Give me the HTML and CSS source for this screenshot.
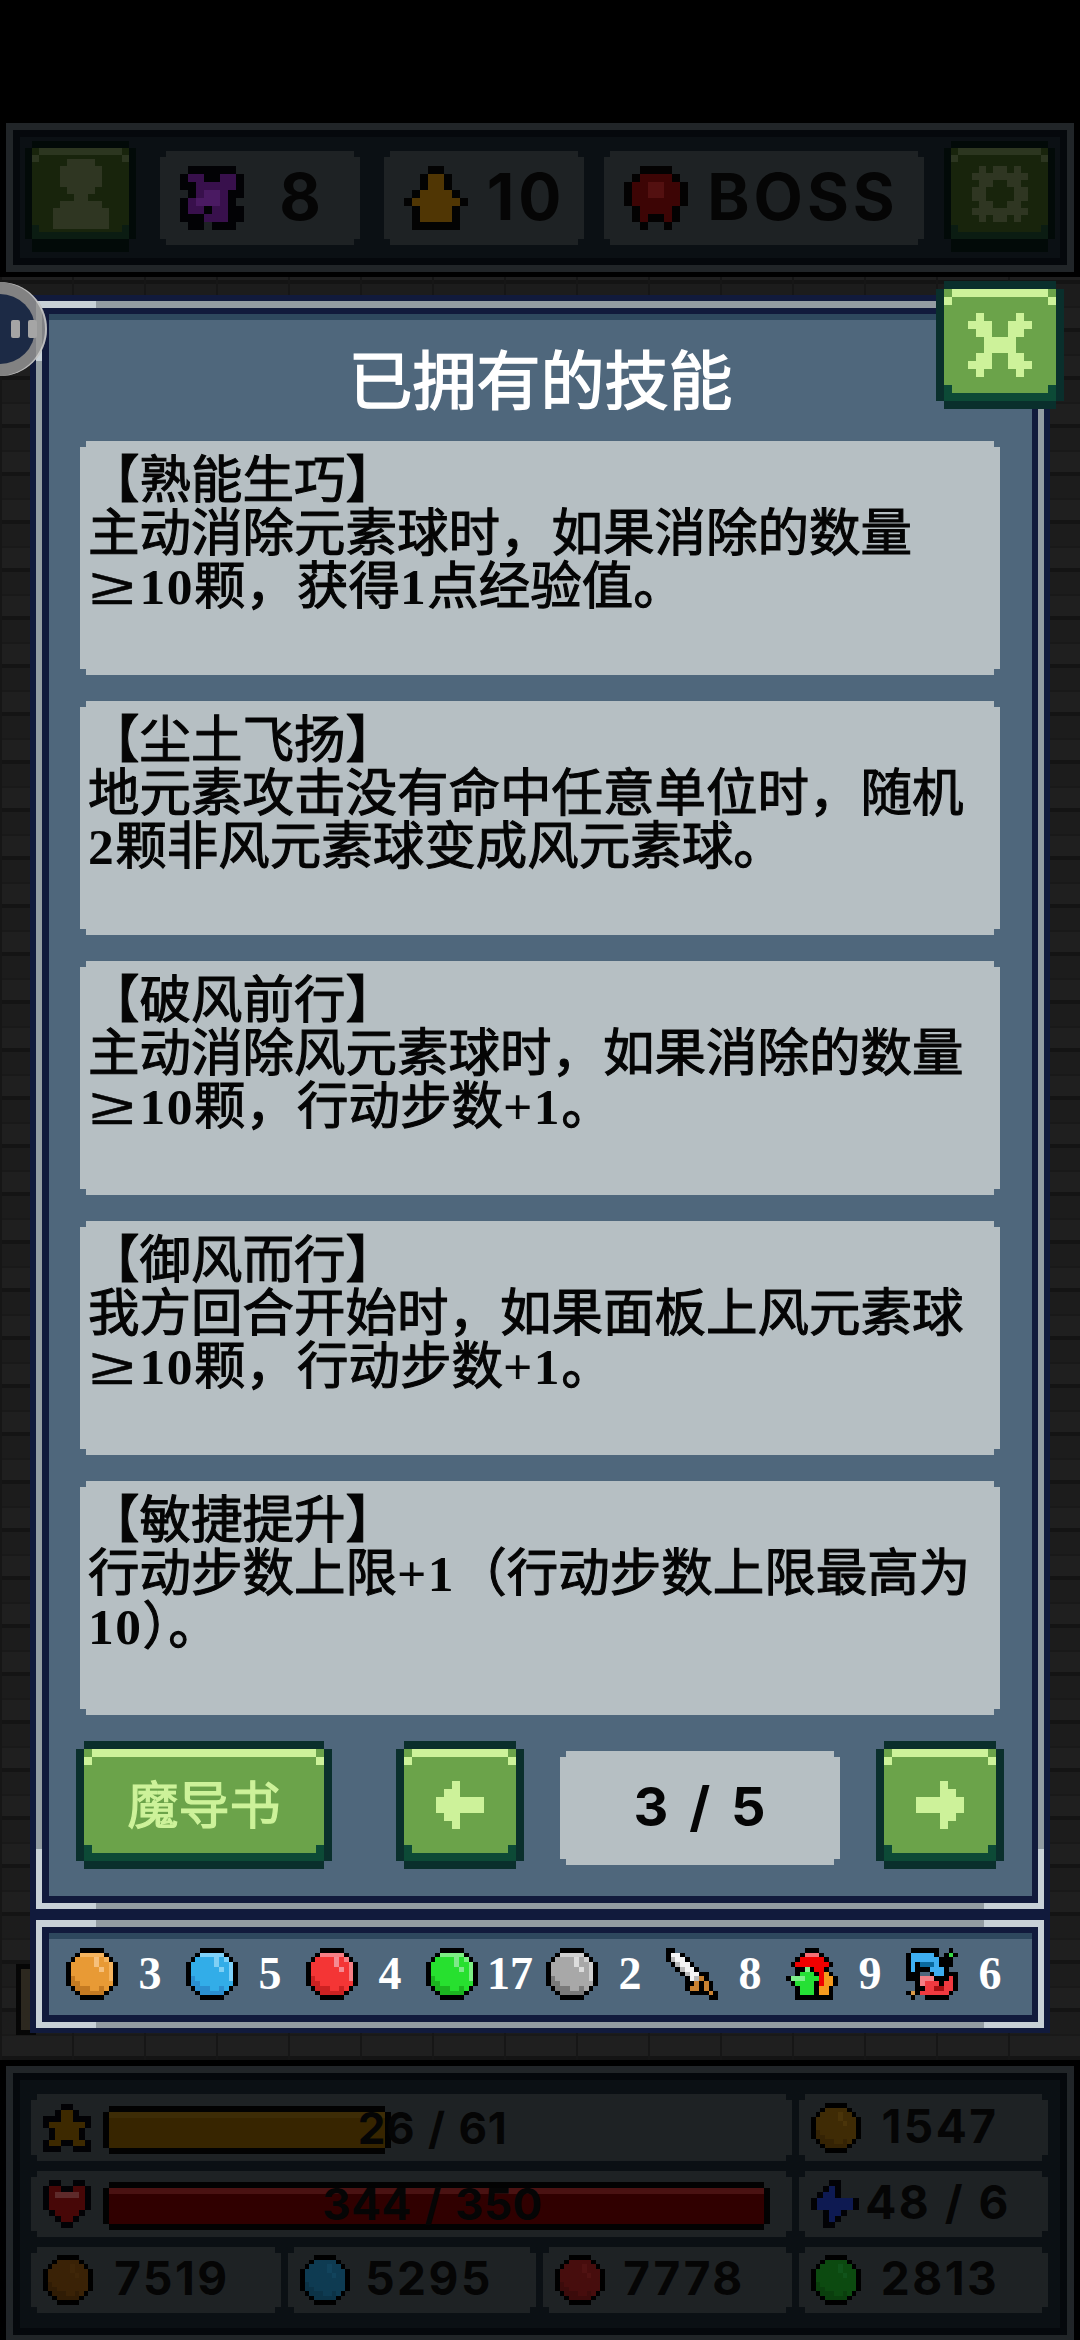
FILE: index.html
```html
<!DOCTYPE html>
<html lang="zh">
<head>
    <meta charset="UTF-8">
    <meta name="viewport" content="width=device-width, initial-scale=1.0">
    <title>已拥有的技能</title>
    <link rel="stylesheet" href="styles.css">
</head>
<body>
    <!-- shared pixel orb, coloured through --b --l --s --h -->
    <svg class="defs" width="0" height="0">
        <symbol id="orb" viewBox="0 0 11 11">
            <path class="o-base" d="M3 1.5h5M2 2.5h7M1 3.5h9M1 4.5h9M1 5.5h9M1 6.5h9M1 7.5h9M2 8.5h7M3 9.5h5"/>
            <path class="o-light" d="M3 1.5h5M8 2.5h1M9.5 3v4"/>
            <path class="o-shade" d="M1 6.5h1M1 7.5h2M2 8.5h3M3 9.5h5M7 8.5h1"/>
            <path class="o-spec" d="M6 3.5h1M7 4.5h1M6 2.5h1"/>
            <path class="o-line" d="M3 .5h5M2 1.5h1M8 1.5h1M1 2.5h1M9 2.5h1M.5 3v5M10.5 3v5M1 8.5h1M9 8.5h1M2 9.5h1M8 9.5h1M3 10.5h5"/>
        </symbol>
    </svg>

    <div class="screen">
        <div class="notch-area"></div>

        <header class="hud hud-top">
            <div class="hud-strip">
                <div class="hud-inner top-row">
                    <button class="btn btn-dim btn-avatar">
                        <svg class="px" width="56" height="70" viewBox="0 0 8 10"><path stroke="#2f3622" d="M2 .5h4M1 1.5h6M1 2.5h6M1 3.5h6M2 4.5h4M3 5.5h2M1 6.5h6M0 7.5h8M0 8.5h8M0 9.5h8"/></svg>
                    </button>
                    <div class="top-card notch card-floor">
                        <svg class="px" width="64" height="64" viewBox="0 0 8 8"><path stroke="#020205" d="M1 .5h6M0 1.5h8M0 2.5h8M1 3.5h7M0 4.5h7M0 5.5h8M0 6.5h8M1 7.5h2M4 7.5h3"/><path stroke="#38104c" d="M1 1.5h2M5 1.5h2M2 2.5h2M4 2.5h3M2 3.5h4M1 4.5h5M1 5.5h2M4 5.5h2M3 6.5h3"/><path stroke="#4a1a62" d="M3 3.5h2M2 4.5h3"/></svg>
                        <span class="top-value">8</span>
                    </div>
                    <div class="top-card notch card-step">
                        <svg class="px" width="64" height="64" viewBox="0 0 8 8"><path stroke="#030303" d="M3 .5h2M2 1.5h4M2 2.5h4M1 3.5h6M0 4.5h8M1 5.5h6M1 6.5h6M1 7.5h6"/><path stroke="#503604" d="M3 1.5h2M3 2.5h2M2 3.5h4M1 4.5h6M2 5.5h4M2 6.5h4"/></svg>
                        <span class="top-value">10</span>
                    </div>
                    <div class="top-card notch card-boss">
                        <svg class="px" width="64" height="64" viewBox="0 0 8 8"><path stroke="#030202" d="M2 .5h4M1 1.5h6M0 2.5h8M0 3.5h8M0 4.5h8M1 5.5h6M1 6.5h6M2 7.5h1M5 7.5h1"/><path stroke="#3d0505" d="M2 1.5h4M1 2.5h6M1 3.5h6M1 4.5h6M2 5.5h4M2 6.5h1M5 6.5h1"/><path stroke="#531010" d="M3 2.5h2M3 3.5h2"/></svg>
                        <span class="top-value">BOSS</span>
                    </div>
                    <button class="btn btn-dim btn-gear">
                        <svg class="px" width="56" height="56" viewBox="0 0 8 8"><path stroke="#2f3622" d="M1 .5h1M3 .5h2M6 .5h1M0 1.5h8M1 2.5h2M5 2.5h2M0 3.5h2M6 3.5h2M0 4.5h2M6 4.5h2M1 5.5h2M5 5.5h2M0 6.5h8M1 7.5h1M3 7.5h2M6 7.5h1"/></svg>
                    </button>
                </div>
            </div>
        </header>

        <main class="wall">
            <div class="stray-item"></div>

            <div class="dialog">
                <section class="frame">
                    <div class="frame-body">
                        <div class="panel panel-skills">
                            <h1 class="dialog-title">已拥有的技能</h1>

                            <div class="skill-list">
                                <article class="skill notch">【熟能生巧】<br>主动消除元素球时，如果消除的数量<br><span class="ge">≥</span><span class="num">10</span>颗，获得<span class="num">1</span>点经验值。</article>
                                <article class="skill notch">【尘土飞扬】<br>地元素攻击没有命中任意单位时，随机<br><span class="num">2</span>颗非风元素球变成风元素球。</article>
                                <article class="skill notch">【破风前行】<br>主动消除风元素球时，如果消除的数量<br><span class="ge">≥</span><span class="num">10</span>颗，行动步数<span class="num">+1</span>。</article>
                                <article class="skill notch">【御风而行】<br>我方回合开始时，如果面板上风元素球<br><span class="ge">≥</span><span class="num">10</span>颗，行动步数<span class="num">+1</span>。</article>
                                <article class="skill notch">【敏捷提升】<br>行动步数上限<span class="num">+1</span>（行动步数上限最高为<br><span class="num">10</span>）。</article>
                            </div>

                            <div class="pager">
                                <button class="btn btn-book">魔导书</button>
                                <button class="btn btn-arrow">
                                    <svg class="px" width="48" height="48" viewBox="0 0 6 6"><path stroke="#cdf29a" d="M2 .5h1M1 1.5h2M0 2.5h6M0 3.5h6M1 4.5h2M2 5.5h1"/></svg>
                                </button>
                                <div class="page-count notch">3 / 5</div>
                                <button class="btn btn-arrow">
                                    <svg class="px" width="48" height="48" viewBox="0 0 6 6"><path stroke="#cdf29a" d="M3 .5h1M3 1.5h2M0 2.5h6M0 3.5h6M3 4.5h2M3 5.5h1"/></svg>
                                </button>
                            </div>
                        </div>
                    </div>
                </section>

                <section class="frame">
                    <div class="frame-body">
                        <div class="panel panel-items">
                            <div class="item"><svg class="orb orb-orange" width="52" height="52"><use href="#orb"/></svg><span class="item-count">3</span></div>
                            <div class="item"><svg class="orb orb-blue" width="52" height="52"><use href="#orb"/></svg><span class="item-count">5</span></div>
                            <div class="item"><svg class="orb orb-red" width="52" height="52"><use href="#orb"/></svg><span class="item-count">4</span></div>
                            <div class="item"><svg class="orb orb-green" width="52" height="52"><use href="#orb"/></svg><span class="item-count">17</span></div>
                            <div class="item"><svg class="orb orb-gray" width="52" height="52"><use href="#orb"/></svg><span class="item-count">2</span></div>
                            <div class="item">
                                <svg class="px" width="52" height="52" viewBox="0 0 11 11">
                                    <path stroke="#f4f4f4" d="M1 1.5h2M2 2.5h2M3 3.5h2M4 4.5h2M5 5.5h2M5 6.5h1"/>
                                    <path stroke="#b9b9b9" d="M1 2.5h1M2 3.5h1M3 4.5h1M4 5.5h1M6 6.5h1"/>
                                    <path stroke="#c98232" d="M7 6.5h1M6 7.5h1M5 8.5h2M8 7.5h1M8 8.5h1M9 9.5h1"/>
                                    <path stroke="#000" d="M0 .5h2M0 1.5h1M3 1.5h1M0 2.5h1M4 2.5h1M1 3.5h1M5 3.5h1M2 4.5h1M6 4.5h1M3 5.5h1M7 5.5h2M4 6.5h1M8 6.5h1M4 7.5h2M7 7.5h1M9 7.5h1M4 8.5h1M7 8.5h1M9 8.5h1M5 9.5h4M10 9.5h1M9 10.5h2"/>
                                </svg>
                                <span class="item-count">8</span>
                            </div>
                            <div class="item">
                                <svg class="px" width="52" height="52" viewBox="0 0 11 11">
                                    <path stroke="#f56f74" d="M4 1.5h3"/>
                                    <path stroke="#f00000" d="M3 2.5h5M2 3.5h7M6 4.5h2M7 5.5h1M7 6.5h1M7 7.5h1"/>
                                    <path stroke="#f59a1e" d="M8 5.5h1M8 6.5h2M8 7.5h2M7 8.5h2M7 9.5h2"/>
                                    <path stroke="#7df08a" d="M4 4.5h1M1 6.5h3"/>
                                    <path stroke="#25e035" d="M3 5.5h3M4 6.5h3M2 7.5h4M3 8.5h3M3 9.5h3"/>
                                    <path stroke="#000" d="M4 .5h3M3 1.5h1M7 1.5h1M2 2.5h1M8 2.5h1M1 3.5h1M9 3.5h1M2 4.5h2M5 4.5h1M8 4.5h1M2 5.5h1M6 5.5h1M9 5.5h1M0 6.5h1M10 6.5h1M1 7.5h1M6 7.5h1M10 7.5h1M2 8.5h1M6 8.5h1M9 8.5h1M2 9.5h1M6 9.5h1M9 9.5h1M2 10.5h8"/>
                                </svg>
                                <span class="item-count">9</span>
                            </div>
                            <div class="item">
                                <svg class="px" width="52" height="52" viewBox="0 0 11 11">
                                    <path stroke="#000" d="M1 .5h6M9 .5h1M0 1.5h1M6 1.5h1M8 1.5h1M10 1.5h1M0 2.5h1M7 2.5h3M0 3.5h1M2 3.5h1M7 3.5h3M0 4.5h1M2 4.5h3M8 4.5h1M0 5.5h3M5 5.5h1M8 5.5h3M0 6.5h3M6 6.5h3M10 6.5h1M2 7.5h1M7 7.5h1M10 7.5h1M2 8.5h2M10 8.5h1M0 9.5h1M2 9.5h1M9 9.5h1M1 10.5h1M4 10.5h5"/>
                                    <path stroke="#3eaef0" d="M1 1.5h5M1 2.5h6M1 3.5h1M6 3.5h1M1 4.5h1M5 4.5h3M6 5.5h2"/>
                                    <path stroke="#0a6a9f" d="M3 3.5h3"/>
                                    <path stroke="#38d848" d="M9 1.5h1"/>
                                    <path stroke="#f57f85" d="M3 6.5h3M3 7.5h1"/>
                                    <path stroke="#f03a40" d="M9 6.5h1M4 7.5h3M8 7.5h2M4 8.5h2M8 8.5h2M3 9.5h6"/>
                                    <path stroke="#a80f12" d="M6 8.5h2"/>
                                    <path stroke="#d89a4a" d="M1 9.5h1"/>
                                </svg>
                                <span class="item-count">6</span>
                            </div>
                        </div>
                    </div>
                </section>

                <button class="btn btn-close">
                    <svg class="px" width="64" height="64" viewBox="0 0 8 8"><path stroke="#cdf29a" d="M1 .5h1M6 .5h1M0 1.5h3M5 1.5h3M1 2.5h2M5 2.5h2M2 3.5h4M2 4.5h4M1 5.5h2M5 5.5h2M0 6.5h3M5 6.5h3M1 7.5h1M6 7.5h1"/></svg>
                </button>
            </div>
        </main>

        <footer class="hud hud-bottom">
            <div class="hud-strip">
                <div class="hud-inner stats">
                    <div class="stat stat-wide notch">
                        <svg class="px" width="48" height="48" viewBox="0 0 8 8"><path stroke="#020205" d="M3 .5h2M2 1.5h4M0 2.5h8M0 3.5h8M1 4.5h6M1 5.5h6M0 6.5h8M0 7.5h3M5 7.5h3"/><path stroke="#3d2900" d="M3 1.5h2M3 2.5h2M1 3.5h6M2 4.5h4M2 5.5h4M1 6.5h2M5 6.5h2"/></svg>
                        <div class="meter">
                            <div class="meter-fill fill-xp" style="width: 42.2%"></div>
                            <span class="meter-text">26 / 61</span>
                        </div>
                    </div>
                    <div class="stat notch">
                        <svg class="orb orb-gold" width="50" height="50"><use href="#orb"/></svg>
                        <span class="stat-value">1547</span>
                    </div>
                    <div class="stat stat-wide notch">
                        <svg class="px" width="48" height="48" viewBox="0 0 8 8"><path stroke="#020205" d="M1 .5h2M5 .5h2M0 1.5h8M0 2.5h8M0 3.5h8M0 4.5h8M1 5.5h6M2 6.5h4M3 7.5h2"/><path stroke="#470707" d="M1 1.5h2M5 1.5h2M1 2.5h6M1 3.5h6M1 4.5h6M2 5.5h4M3 6.5h2"/><path stroke="#5e2a2a" d="M2 2.5h4"/></svg>
                        <div class="meter">
                            <div class="meter-fill fill-hp" style="width: 100%"></div>
                            <span class="meter-text">344 / 350</span>
                        </div>
                    </div>
                    <div class="stat notch">
                        <svg class="px" width="48" height="48" viewBox="0 0 8 8"><path stroke="#020205" d="M3 .5h2M2 1.5h3M1 2.5h4M0 3.5h8M0 4.5h8M2 5.5h4M2 6.5h3M2 7.5h2"/><path stroke="#0e1a52" d="M3 1.5h1M2 2.5h2M1 3.5h6M1 4.5h6M3 5.5h2M3 6.5h1"/></svg>
                        <span class="stat-value">48 / 6</span>
                    </div>
                    <div class="stat notch">
                        <svg class="orb orb-brown" width="50" height="50"><use href="#orb"/></svg>
                        <span class="stat-value">7519</span>
                    </div>
                    <div class="stat notch">
                        <svg class="orb orb-teal" width="50" height="50"><use href="#orb"/></svg>
                        <span class="stat-value">5295</span>
                    </div>
                    <div class="stat notch">
                        <svg class="orb orb-wine" width="50" height="50"><use href="#orb"/></svg>
                        <span class="stat-value">7778</span>
                    </div>
                    <div class="stat notch">
                        <svg class="orb orb-moss" width="50" height="50"><use href="#orb"/></svg>
                        <span class="stat-value">2813</span>
                    </div>
                </div>
            </div>
        </footer>

        <div class="float-ball">
            <div class="float-ball-core">
                <span class="float-ball-tick"></span>
                <span class="float-ball-tick"></span>
            </div>
        </div>
    </div>
</body>
</html>
```

FILE: styles.css
```css
* {
    box-sizing: border-box;
}

body {
    margin: 0;
    background-color: #000000;
    font-family: "Noto Sans CJK SC", sans-serif;
}

.defs {
    position: absolute;
}

.screen {
    position: relative;
    width: 1080px;
    height: 2340px;
    display: flex;
    flex-direction: column;
    overflow: hidden;
}

.notch-area {
    height: 123px;
    background-color: #000000;
}

/* pixel art */
.px,
.orb {
    flex: none;
    display: block;
    shape-rendering: crispEdges;
}

.px path,
.orb path {
    fill: none;
    stroke-width: 1;
}

.o-base { stroke: var(--b); }
.o-light { stroke: var(--l); }
.o-shade { stroke: var(--s); }
.o-spec { stroke: var(--h); }
.o-line { stroke: #000000; }

.orb-orange { --b: #e89a35; --l: #f5b45f; --s: #c47a22; --h: #f6c07c; }
.orb-blue { --b: #32ade8; --l: #7fd2fa; --s: #2b8fd0; --h: #7fd0f5; }
.orb-red { --b: #f43535; --l: #f77f85; --s: #cc2222; --h: #f58a92; }
.orb-green { --b: #27e02f; --l: #7dee84; --s: #1cb520; --h: #7fe88a; }
.orb-gray { --b: #a8a8a8; --l: #d0d0d0; --s: #7a7a7a; --h: #dcdcdc; }
.orb-gold { --b: #3f2b05; --l: #3f2b05; --s: #352304; --h: #4a3409; }
.orb-brown { --b: #3a2206; --l: #3a2206; --s: #301c05; --h: #3f2608; }
.orb-teal { --b: #0e3b52; --l: #0e3b52; --s: #0c3347; --h: #11435c; }
.orb-wine { --b: #470d0d; --l: #470d0d; --s: #3c0b0b; --h: #501212; }
.orb-moss { --b: #0c4a10; --l: #0c4a10; --s: #0a3f0d; --h: #10531a; }

/* stepped corners */
.notch {
    clip-path: polygon(
        6px 0, calc(100% - 6px) 0, calc(100% - 6px) 6px, 100% 6px,
        100% calc(100% - 6px), calc(100% - 6px) calc(100% - 6px), calc(100% - 6px) 100%, 6px 100%,
        6px calc(100% - 6px), 0 calc(100% - 6px), 0 6px, 6px 6px
    );
}

/* buttons */
.btn {
    --u: 8px;
    --hi: #cdf29a;
    --lo: #0c4a36;
    --face: #6ba34a;
    --edge: #0a2f2c;
    margin: var(--u);
    padding: 0;
    border: none;
    height: 112px;
    display: flex;
    flex: none;
    align-items: center;
    justify-content: center;
    box-shadow: calc(var(--u) * -1) 0 0 var(--edge), var(--u) 0 0 var(--edge), 0 calc(var(--u) * -1) 0 var(--edge), 0 var(--u) 0 var(--edge);
    background:
        linear-gradient(var(--hi), var(--hi)) var(--u) 0 / calc(100% - var(--u) * 2) var(--u) no-repeat,
        linear-gradient(var(--hi), var(--hi)) 0 var(--u) / var(--u) var(--u) no-repeat,
        linear-gradient(var(--hi), var(--hi)) 100% var(--u) / var(--u) var(--u) no-repeat,
        linear-gradient(var(--lo), var(--lo)) 0 100% / 100% var(--u) no-repeat,
        linear-gradient(var(--lo), var(--lo)) 0 calc(100% - var(--u)) / var(--u) var(--u) no-repeat,
        linear-gradient(var(--lo), var(--lo)) 100% calc(100% - var(--u)) / var(--u) var(--u) no-repeat,
        var(--face);
}

.btn-book {
    width: 240px;
    margin-right: 36px;
    padding-bottom: 6px;
    color: #cdf29a;
    font-family: "Noto Sans CJK SC", sans-serif;
    font-size: 51px;
    line-height: 1;
    -webkit-text-stroke: 1.2px #cdf29a;
}

.btn-arrow {
    width: 112px;
}

.btn-close {
    position: absolute;
    top: -14px;
    left: 906px;
    width: 112px;
}

.btn-dim {
    --u: 7px;
    --hi: #2c3620;
    --lo: #0b1c12;
    --face: #18240c;
    --edge: #020a08;
    height: 91px;
    width: 97px;
    margin-top: 11px;
    box-shadow: -7px 0 0 var(--edge), 7px 0 0 var(--edge), 0 -7px 0 var(--edge), 0 13px 0 var(--edge);
}

.btn-avatar {
    margin-left: 12px;
    margin-right: 31px;
}

.btn-gear {
    margin-left: 27px;
    margin-right: 0;
}

/* hud frames */
.hud {
    background-color: #000000;
    padding: 0 6px 5px;
}

.hud-strip {
    padding: 7px;
    background-color: #212528;
}

.hud-inner {
    border: 7px solid #05080c;
    background-color: #0b1014;
}

.hud-top {
    height: 154px;
}

.top-row {
    height: 135px;
    display: flex;
    align-items: flex-start;
}

.top-card {
    height: 94px;
    margin-top: 14px;
    padding-left: 20px;
    display: flex;
    align-items: center;
    background-color: #1e2224;
}

.card-floor,
.card-step {
    width: 200px;
}

.card-step {
    margin-left: 24px;
}

.card-boss {
    width: 320px;
    margin-left: 20px;
    padding-right: 6px;
}

.top-value {
    flex: 1;
    padding-bottom: 3px;
    text-align: center;
    font-family: Inter, sans-serif;
    font-size: 64px;
    font-weight: 700;
    letter-spacing: 4px;
    line-height: 1;
    color: #050505;
}

/* wall behind the dialog */
.wall {
    position: relative;
    height: 1783px;
    padding-top: 18px;
    background-color: #1e1e1e;
    background-image:
        repeating-linear-gradient(90deg, #161616 0 2px, transparent 2px 72px),
        repeating-linear-gradient(0deg, #141414 0 4px, #1f1f1f 4px 24px, #191919 24px 26px, #1c1c1c 26px 48px);
}

.stray-item {
    position: absolute;
    top: 1687px;
    left: 16px;
    width: 20px;
    height: 71px;
    border: 5px solid #060606;
    border-right: none;
    background-color: #2c281f;
}

/* dialog */
.dialog {
    position: relative;
    width: 1020px;
    margin-left: 30px;
    padding: 6px 6px 5px;
    display: flex;
    flex-direction: column;
    gap: 11px;
    background-color: #111a3c;
}

.frame {
    padding: 7px 6px 6px;
    background:
        linear-gradient(#c8d1d7, #c8d1d7) 0 0 / 60px 60px no-repeat,
        linear-gradient(#c8d1d7, #c8d1d7) 100% 0 / 60px 60px no-repeat,
        linear-gradient(#c8d1d7, #c8d1d7) 0 100% / 60px 60px no-repeat,
        linear-gradient(#c8d1d7, #c8d1d7) 100% 100% / 60px 60px no-repeat,
        #939ca2;
}

.frame-body {
    border-style: solid;
    border-color: #111a3c;
    border-width: 6px 6px 7px 7px;
}

.panel {
    border-top: 6px solid #2e485e;
    background-color: #4f677c;
}

.panel-skills {
    height: 1582px;
}

.dialog-title {
    height: 121px;
    margin: 0;
    padding-top: 14px;
    text-align: center;
    font-size: 64px;
    font-weight: 400;
    line-height: 84px;
    color: #ffffff;
    -webkit-text-stroke: 1.5px #ffffff;
}

.skill-list {
    margin: 0 32px 0 31px;
    display: flex;
    flex-direction: column;
    gap: 26px;
}

.skill {
    height: 234px;
    padding: 13px 0 0 8px;
    white-space: nowrap;
    background-color: #b6bfc3;
    color: #050505;
    font-family: "Liberation Serif", "Noto Sans CJK SC", serif;
    font-size: 51.5px;
    font-weight: 400;
    line-height: 53px;
    -webkit-text-stroke: 1.1px #050505;
}

/* straight-barred sign, stretched to the width of a full-width character */
.ge {
    display: inline-block;
    width: 51.5px;
    line-height: 1;
    font-family: "Liberation Sans", sans-serif;
    transform: translateX(2px) scaleX(1.55);
    transform-origin: left center;
    -webkit-text-stroke: 0.5px #050505;
}

.num {
    font-weight: 700;
    letter-spacing: 1.5px;
    -webkit-text-stroke: 0;
}

.pager {
    margin-top: 26px;
    padding-left: 27px;
    display: flex;
    align-items: center;
    gap: 36px;
}

.page-count {
    width: 280px;
    height: 114px;
    margin-top: 6px;
    padding-bottom: 4px;
    display: flex;
    align-items: center;
    justify-content: center;
    background-color: #b6bfc3;
    color: #050505;
    font-family: Inter, sans-serif;
    font-size: 54px;
    font-weight: 700;
    word-spacing: 6px;
    letter-spacing: 1px;
}

.panel-items {
    height: 82px;
    padding: 9px 0 0 17px;
    display: flex;
}

.item {
    width: 120px;
    display: flex;
    align-items: flex-start;
}

.item-count {
    width: 64px;
    text-align: center;
    font-family: "Liberation Serif", serif;
    font-size: 46px;
    font-weight: 700;
    line-height: 52px;
    color: #ffffff;
}

/* bottom stats */
.hud-bottom {
    height: 280px;
    padding-top: 6px;
}

.stats {
    height: 262px;
    padding: 14px 12px 9px 11px;
    display: grid;
    grid-template-columns: 250px 248px 249px 249px;
    grid-template-rows: 67px 66px 66px;
    column-gap: 7px;
    row-gap: 10px;
}

.stat {
    padding-left: 12px;
    display: flex;
    align-items: center;
    background-color: #1e2224;
}

.stat-wide {
    grid-column: span 3;
    padding-right: 22px;
    gap: 12px;
}

.stat-value {
    width: 158px;
    padding-bottom: 4px;
    text-align: center;
    font-family: Inter, sans-serif;
    font-size: 46px;
    font-weight: 700;
    letter-spacing: 2.5px;
    color: #050505;
}

.meter {
    flex: 1;
    height: 48px;
    padding: 6px;
    display: grid;
    align-items: center;
}

.meter-fill,
.meter-text {
    grid-area: 1 / 1;
}

.meter-fill {
    height: 36px;
}

.fill-xp {
    background-color: #372500;
    box-shadow: -6px 0 0 #020202, 6px 0 0 #020202, 0 -6px 0 #020202, 0 6px 0 #020202, inset 0 6px 0 #3d2c06;
}

.fill-hp {
    background-color: #300000;
    box-shadow: -6px 0 0 #020202, 6px 0 0 #020202, 0 -6px 0 #020202, 0 6px 0 #020202, inset 0 6px 0 #4a1212;
}

.meter-text {
    margin-right: 8px;
    padding-bottom: 4px;
    text-align: center;
    font-family: Inter, sans-serif;
    font-size: 44px;
    font-weight: 700;
    letter-spacing: 0.5px;
    word-spacing: 2px;
    line-height: 36px;
    color: #050505;
}

/* floating assistant ball, sits over the dialog corner */
.float-ball {
    position: absolute;
    top: 282px;
    left: -47px;
    width: 94px;
    height: 94px;
    padding: 12px;
    border-radius: 50%;
    background-color: rgba(145, 145, 145, 0.88);
    box-shadow: inset -2px 0 0 rgba(255, 255, 255, 0.45);
}

.float-ball-core {
    width: 70px;
    height: 70px;
    padding-left: 46px;
    border-radius: 50%;
    display: flex;
    align-items: center;
    gap: 8px;
    background-color: #1c2a45;
}

.float-ball-tick {
    width: 9px;
    height: 18px;
    flex: none;
    border-radius: 2px;
    background-color: #a5a5a5;
}
```
